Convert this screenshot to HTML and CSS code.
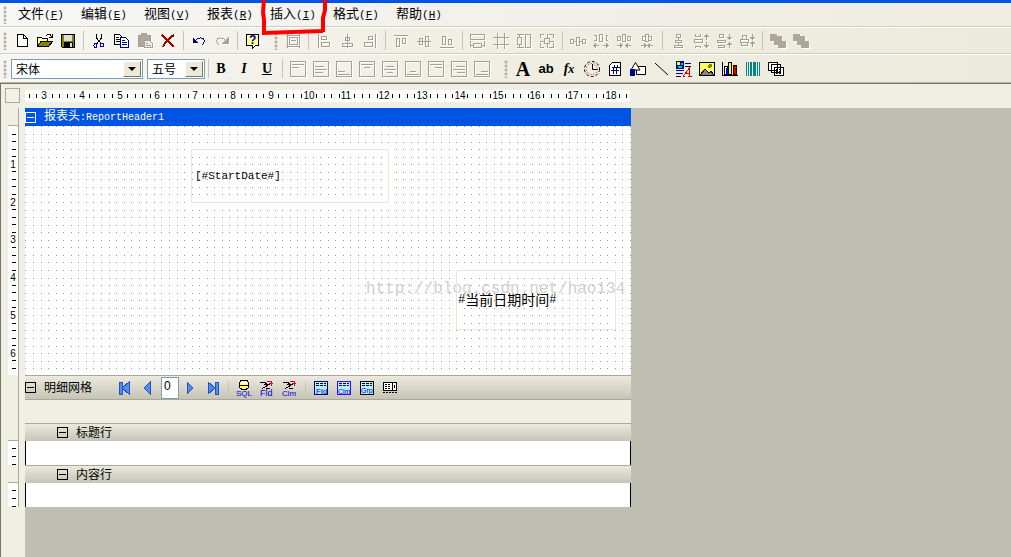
FILE: index.html
```html
<!DOCTYPE html>
<html lang="zh-CN">
<head>
<meta charset="utf-8">
<title>报表设计器</title>
<link rel="stylesheet" href="styles.css">
</head>
<body>
<div class="app">
<header>
  <nav class="menubar">
    <i class="grip"></i>
    <button>文件<span>(<u>F</u>)</span></button>
    <button>编辑<span>(<u>E</u>)</span></button>
    <button>视图<span>(<u>V</u>)</span></button>
    <button>报表<span>(<u>R</u>)</span></button>
    <button class="marked">插入<span>(<u>I</u>)</span>
      <svg class="marker" width="66" height="38" viewBox="0 0 66 38"><path d="M3 0 2 12 3 20 3 33 62 31M62 32 62 18 64 10 64 0"/></svg></button>
    <button>格式<span>(<u>F</u>)</span></button>
    <button>帮助<span>(<u>H</u>)</span></button>
  </nav>

  <div class="toolbar standard" role="toolbar" aria-label="标准">
    <i class="grip"></i>
    <button aria-label="新建"><svg class="i" viewBox="0 0 16 16"><path d="M3.500 1.500h6l4 4v8h-10zM9.500 1.500v4h4" fill="#fff" stroke="#000"/></svg></button>
    <button aria-label="打开"><svg class="i" viewBox="0 0 16 16"><path d="M.5 13.500v-9h4l1 1h5v3" fill="#ffffa0" stroke="#000"/><path d="M.5 13.500 4 8.500h11.500l-4 5z" fill="#848400" stroke="#000"/><path d="M9 3 11 1.500h2L15 4M15 1v3h-3" fill="none" stroke="#000"/></svg></button>
    <button aria-label="保存"><svg class="i" viewBox="0 0 16 16"><path d="M1.500 1.500h13v13h-12l-1-1z" fill="#848400" stroke="#000"/><path d="M4 2h8v6H4z" fill="#ddd"/><path d="M4 9h9v5H4z" fill="#000"/><path d="M10 10h2v4h-2z" fill="#ddd"/></svg></button>
    <i class="sep"></i>
    <button aria-label="剪切"><svg class="i" viewBox="0 0 16 16"><path d="M5.500 1v4l5 6M10.500 1v4l-5 6" fill="none" stroke="#000"/><ellipse cx="4.500" cy="12.500" rx="1.500" ry="2" fill="none" stroke="#0000a0"/><ellipse cx="11" cy="12" rx="1.500" ry="2" fill="none" stroke="#0000a0"/></svg></button>
    <button aria-label="复制"><svg class="i" viewBox="0 0 16 16"><path d="M.5 1.500h5l3 3v7h-8z" fill="#fff" stroke="#000"/><path d="M2 4.500h3M2 6.500h4M2 8.500h4" stroke="#000"/><path d="M6.500 4.500h5l3 3v7h-8z" fill="#fff" stroke="#000084"/><path d="M8 7.500h3M8 9.500h5M8 11.500h5" stroke="#000084"/></svg></button>
    <button aria-label="粘贴" disabled><svg class="i dim" viewBox="0 0 16 16"><path d="M1 2h3l1-2h4l1 2h3v5H7v6H1z" fill="#aca899"/><path d="M7.500 7.500h5l3 3v4h-8zM9 10h2M9 12h5" fill="#eee"/></svg></button>
    <button aria-label="删除"><svg class="i" viewBox="0 0 16 16"><path d="M2 2 14 14M14 2C9 5 5 9 3 14" fill="none" stroke="#a00000" stroke-width="2"/></svg></button>
    <i class="sep"></i>
    <button aria-label="撤消"><svg class="i" viewBox="0 0 16 16"><path d="M4 8c3-4 8-4 9-1 1 2 0 3-2 5" fill="none" stroke="#000084"/><path d="M2 5v5h5z" fill="#000084"/></svg></button>
    <button aria-label="重做" disabled><svg class="i dim" viewBox="0 0 16 16"><path d="M12 8C9 4 4 4 3 7c-1 2 0 3 2 5"/><path d="M14 5v5H9z" fill="#aca899"/></svg></button>
    <i class="sep"></i>
    <button aria-label="帮助"><svg class="i" viewBox="0 0 16 16"><path d="M1.500 1.500h12v11h-3l-3 3v-3h-6z" fill="#ffffa0" stroke="#000"/><text x="4" y="11" font-size="12" fill="#000084" font-weight="bold">?</text></svg></button>
    <i class="grip wide"></i>
    <button aria-label="对齐网格" disabled><svg class="i dim" viewBox="0 0 16 16"><path d="M4.500 4.500h8v7h-8zM2.500 1v14M1 2.500h14M14.500 1v14M1 13.500h14M6 7.500h5"/></svg></button>
    <i class="sep"></i>
    <button aria-label="左对齐" disabled><svg class="i dim" viewBox="0 0 16 16"><path d="M2.500 1v14M5.500 3.500h5v3h-5zM5.500 9.500h8v4h-8z"/></svg></button>
    <button aria-label="水平居中" disabled><svg class="i dim" viewBox="0 0 16 16"><path d="M8.500 1v14M6.500 4.500h4v3h-4zM3.500 10.500h10v3h-10z"/></svg></button>
    <button aria-label="右对齐" disabled><svg class="i dim" viewBox="0 0 16 16"><path d="M13.500 1v14M6.500 3.500h4v3h-4zM2.500 9.500h8v4h-8z"/></svg></button>
    <i class="sep"></i>
    <button aria-label="顶端对齐" disabled><svg class="i dim" viewBox="0 0 16 16"><path d="M1 2.500h14M3.500 5.500h3v8h-3zM9.500 5.500h3v5h-3z"/></svg></button>
    <button aria-label="垂直居中" disabled><svg class="i dim" viewBox="0 0 16 16"><path d="M1 8.500h14M3.500 5.500h3v6h-3zM9.500 3.500h3v10h-3z"/></svg></button>
    <button aria-label="底端对齐" disabled><svg class="i dim" viewBox="0 0 16 16"><path d="M1 14.500h14M3.500 3.500h3v8h-3zM9.500 6.500h3v5h-3z"/></svg></button>
    <i class="sep"></i>
    <button aria-label="等宽" disabled><svg class="i dim" viewBox="0 0 16 16"><path d="M.5 1.500h14v5H.5zM3.500 10.500h8v4h-8zM.5 8v6M14.500 8v6M1 12.500h2M12 12.500h2"/></svg></button>
    <button aria-label="等尺寸" disabled><svg class="i dim" viewBox="0 0 16 16"><path d="M4.500 0v16M11.500 0v16M0 4.500h16M0 11.500h16"/></svg></button>
    <button aria-label="等高" disabled><svg class="i dim" viewBox="0 0 16 16"><path d="M9.500 1.500h5v13h-5zM1.500 4.500h4v7h-4zM1 1.500h7M1 14.500h7M3.500 2v2M3.500 12v2"/></svg></button>
    <button aria-label="增大" disabled><svg class="i dim" viewBox="0 0 16 16"><path d="M1.500 5V1.500H5M10 1.500h4.500V5M1.500 10v4.500H5M10 14.500h4.500V10M5.500 5.500h5v5h-5zM8.500 1v4M8.500 11v4M1 8.500h4M11 8.500h4"/></svg></button>
    <i class="sep"></i>
    <button aria-label="水平间距相等" disabled><svg class="i dim" viewBox="0 0 16 16"><path d="M.5 6.500h3v4h-3zM6.500 4.500h3v8h-3zM12.500 6.500h3v4h-3zM4 8.500h2M10 8.500h2"/></svg></button>
    <button aria-label="增加水平间距" disabled><svg class="i dim" viewBox="0 0 16 16"><path d="M1 2.500h2v5H1M6.500 1.500h3v7h-3zM15 2.500h-2v5h2M1 12.500h5M3 10.500 1 12.500l2 2M10 12.500h5M13 10.500l2 2-2 2"/></svg></button>
    <button aria-label="减少水平间距" disabled><svg class="i dim" viewBox="0 0 16 16"><path d="M1.500 3.500h3v4h-3zM6.500 1.500h3v7h-3zM11.500 3.500h3v4h-3zM1 12.500h5M4 10.500l2 2-2 2M10 12.500h5M12 10.500l-2 2 2 2"/></svg></button>
    <button aria-label="移除水平间距" disabled><svg class="i dim" viewBox="0 0 16 16"><path d="M3.500 3.500h3v4h-3zM6.500 1.500h3v7h-3zM9.500 3.500h3v4h-3zM2 12.500h5M5 10.500l2 2-2 2M9 12.500h5M11 10.500l-2 2 2 2"/></svg></button>
    <i class="sep"></i>
    <button aria-label="垂直间距相等" disabled><svg class="i dim" viewBox="0 0 16 16"><path d="M6.500 1.500h4v3h-4zM5.500 7.500h6v2h-6zM4.500 12.500h8v2h-8zM8.500 5v2M8.500 10v2"/></svg></button>
    <button aria-label="增加垂直间距" disabled><svg class="i dim" viewBox="0 0 16 16"><path d="M2.500 1v2h5V1M1.500 6.500h8v3h-8zM2.500 15v-2h5v2M13.500 2v5M11.500 4l2-2 2 2M13.500 9v5M11.500 12l2 2 2-2"/></svg></button>
    <button aria-label="减少垂直间距" disabled><svg class="i dim" viewBox="0 0 16 16"><path d="M3.500 1.500h4v3h-4zM1.500 7.500h8v2h-8zM2.500 12.500h6v2h-6zM13.500 1v5M11.500 4l2 2 2-2M13.500 10v5M11.500 12l2-2 2 2"/></svg></button>
    <button aria-label="移除垂直间距" disabled><svg class="i dim" viewBox="0 0 16 16"><path d="M3.500 2.500h4v4h-4zM1.500 6.500h8v3h-8zM2.500 9.500h6v3h-6zM13.500 1v5M11.500 4l2 2 2-2M13.500 9v5M11.500 11l2-2 2 2"/></svg></button>
    <i class="sep"></i>
    <button aria-label="置前" disabled><svg class="i dim" viewBox="0 0 16 16"><path d="M0 1h7v2h5v5h4v7H8v-3H4V8H0z" fill="#aca899" stroke="none"/></svg></button>
    <button aria-label="置后" disabled><svg class="i dim" viewBox="0 0 16 16"><path d="M0 1h7v2h5v5h4v7H8v-3H4V8H0z" fill="#aca899" stroke="none"/></svg></button>
  </div>

  <div class="toolbar format" role="toolbar" aria-label="格式">
    <i class="grip"></i>
    <span class="combo font-name"><select aria-label="字体"><option>宋体</option></select><i class="drop"></i></span>
    <span class="combo font-size"><select aria-label="字号"><option>五号</option></select><i class="drop"></i></span>
    <i class="sep narrow"></i>
    <button class="letter"><b>B</b></button>
    <button class="letter"><em>I</em></button>
    <button class="letter"><u>U</u></button>
    <i class="sep"></i>
    <button aria-label="左上" disabled><svg class="i dim" viewBox="0 0 16 16"><path d="M.5.500h15v15H.5zM2 3.500h12M2 6.500h7"/></svg></button>
    <button aria-label="左中" disabled><svg class="i dim" viewBox="0 0 16 16"><path d="M.5.500h15v15H.5zM2 5.500h9M2 8.500h12M2 11.500h8"/></svg></button>
    <button aria-label="左下" disabled><svg class="i dim" viewBox="0 0 16 16"><path d="M.5.500h15v15H.5zM2 10.500h7M2 13.500h12"/></svg></button>
    <button aria-label="中上" disabled><svg class="i dim" viewBox="0 0 16 16"><path d="M.5.500h15v15H.5zM2 3.500h12M5 6.500h6"/></svg></button>
    <button aria-label="正中" disabled><svg class="i dim" viewBox="0 0 16 16"><path d="M.5.500h15v15H.5zM4 5.500h8M2 8.500h12M5 11.500h6"/></svg></button>
    <button aria-label="中下" disabled><svg class="i dim" viewBox="0 0 16 16"><path d="M.5.500h15v15H.5zM5 10.500h6M2 13.500h12"/></svg></button>
    <button aria-label="右上" disabled><svg class="i dim" viewBox="0 0 16 16"><path d="M.5.500h15v15H.5zM2 3.500h12M7 6.500h7"/></svg></button>
    <button aria-label="右中" disabled><svg class="i dim" viewBox="0 0 16 16"><path d="M.5.500h15v15H.5zM5 5.500h9M2 8.500h12M6 11.500h8"/></svg></button>
    <button aria-label="右下" disabled><svg class="i dim" viewBox="0 0 16 16"><path d="M.5.500h15v15H.5zM7 10.500h7M2 13.500h12"/></svg></button>
    <i class="grip wider"></i>
    <button class="glyph-a">A</button>
    <button class="glyph-ab">ab</button>
    <button class="glyph-fx">f<small>x</small></button>
    <button aria-label="时间"><svg class="i smooth" viewBox="0 0 16 16"><circle cx="8" cy="8" r="7.500" fill="none" stroke="#000" stroke-dasharray="3 2"/><circle cx="8" cy="8" r="5.500" fill="none" stroke="#d00000" stroke-dasharray="1 2"/><path d="M8.500 3v5.500H13" fill="none" stroke="#000"/></svg></button>
    <button aria-label="页码"><svg class="i" viewBox="0 0 16 16"><path d="M5.500 1.500h8v13h-11v-10z" fill="#fff" stroke="#000"/><path d="M5 6.500h8M4 9.500h8M7.500 4 6 13M10.500 4 9 13" stroke="#000084"/></svg></button>
    <button aria-label="图形"><svg class="i smooth" viewBox="0 0 16 16"><path d="M6.500 5.500h9v8h-9z" fill="#fff" stroke="#000"/><path d="M5.500 1.500 10 9H1z" fill="#fff" stroke="#000"/><path d="M0 8h5v7H0z" fill="#000084"/></svg></button>
    <button aria-label="线条"><svg class="i smooth" viewBox="0 0 16 16"><path d="M2 2 15 14" stroke="#000"/></svg></button>
    <button aria-label="图文框"><svg class="i" viewBox="0 0 16 16"><path d="M0 0h8v8H0z" fill="#000084"/><path d="M1 1h3v3H1z" fill="#ff0"/><path d="M5 2h2v2H5zM2 5h4v2H2z" fill="#0cc"/><path d="M9 2.500h6M9 5.500h6M0 9.500h8M0 12.500h7M0 15.500h5" stroke="#000084"/><path d="M7 15.500 13.500 7v8M9 12.500h4M12 15.500h4M7 15.500h2" fill="none" stroke="#e00000"/></svg></button>
    <button aria-label="图片"><svg class="i" viewBox="0 0 16 16"><path d="M.5 1.500h15v13H.5z" fill="#ffff60" stroke="#000"/><circle cx="11" cy="5" r="2" fill="#848400"/><path d="M1 14 6 8l4 4 2-2 3 4z" fill="#848484" stroke="#000"/></svg></button>
    <button aria-label="图表"><svg class="i" viewBox="0 0 16 16"><path d="M.5 1v13H16" fill="none" stroke="#000"/><path d="M2.500 5.500h3v8h-3z" fill="#fff" stroke="#000"/><path d="M4 7h3v7H4z" fill="#00f"/><path d="M6.500 1.500h3v12h-3z" fill="#ff0" stroke="#000"/><path d="M11.500 4.500h3v9h-3z" fill="#e00000" stroke="#000"/></svg></button>
    <button aria-label="条形码"><svg class="i" viewBox="0 0 16 16"><path d="M1.500 1v14M3.500 1v14M12.500 1v14M14.500 1v14" stroke="#008484"/><path d="M6 1v14M9 1v14" stroke="#008484" stroke-width="2"/><path d="M10.500 1v14" stroke="#008484"/></svg></button>
    <button aria-label="子报表"><svg class="i" viewBox="0 0 16 16"><path d="M.5 1.500h9v8h-9zM3.500 3.500h9v8h-9zM6.500 6.500h9v8h-9z" fill="#fff" stroke="#000"/><path d="M8 8.500h6M8 10.500h6M8 12.500h6" stroke="#000" stroke-dasharray="2 1"/></svg></button>
  </div>
</header>

<main class="work">
  <div class="top-ruler">
    <span class="corner"></span>
    <svg class="ruler-h" id="ruler-h"></svg>
  </div>

  <div class="design">
    <div class="side side-head"><span></span></div>
    <section class="band-title active"><button class="fold" aria-label="折叠"></button><span>报表头<span class="latin">:ReportHeader1</span></span></section>

    <div class="side side-ruler"><svg id="ruler-v"></svg></div>
    <section class="canvas">
      <svg class="dots"><defs><pattern id="dots" x="8" y="8" width="68" height="68" patternUnits="userSpaceOnUse"></pattern></defs><rect width="100%" height="100%" fill="url(#dots)"/></svg>
      <div class="watermark">http://blog.csdn.net/hao134</div>
      <div class="field start-date">[#StartDate#]</div>
      <div class="field now"><span>#</span>当前日期时间<span>#</span></div>
    </section>

    <div class="side side-blank"></div>
    <section class="detail">
      <div class="detail-bar">
        <button class="fold" aria-label="折叠"></button><span class="detail-name">明细网格</span>
        <button class="tool" aria-label="首条"><svg class="i nav" viewBox="0 0 16 16"><path d="M3 2h3v12H3zM13 2v12L6 8z"/></svg></button>
        <button class="tool" aria-label="上一条"><svg class="i nav" viewBox="0 0 16 16"><path d="M11 2v12L5 8z"/></svg></button>
        <input aria-label="记录" value="0">
        <button class="tool" aria-label="下一条"><svg class="i nav" viewBox="0 0 16 16"><path d="M5 2v12l6-6z"/></svg></button>
        <button class="tool" aria-label="末条"><svg class="i nav" viewBox="0 0 16 16"><path d="M3 2v12l7-6zM10 2h3v12h-3z"/></svg></button>
        <i class="sep"></i>
        <button class="tool" aria-label="查询"><svg class="i" viewBox="0 0 16 16"><path d="M3.500 2.500 5 .5h6l1.500 2v5l-2 1.500h-5l-2-1.500z" fill="#ffff60" stroke="#000"/><path d="M5 2h6v2H5z" fill="#fff"/><path d="M4 5.500h9" stroke="#000"/><text x="0" y="16" font-size="8">SQL</text></svg></button>
        <button class="tool" aria-label="字段"><svg class="i" viewBox="0 0 16 16"><path d="M1 2.500h5L9 6M3 8.500 11 4M5 4.500h5M7 8h4" fill="none" stroke="#000"/><path d="M8 1.500h4M10 3.500h4M12 6V1" stroke="#d00040"/><text x="1" y="16" font-size="9">Fld</text></svg></button>
        <button class="tool" aria-label="列"><svg class="i" viewBox="0 0 16 16"><path d="M1 2.500h5L9 6M3 8.500 11 4M5 4.500h5M7 8h4" fill="none" stroke="#000"/><path d="M8 1.500h4M10 3.500h4M12 6V1" stroke="#d00040"/><text x="0" y="16" font-size="8">Clm</text></svg></button>
        <i class="sep"></i>
        <button class="tool" aria-label="字段列表"><svg class="i" viewBox="0 0 16 16"><path d="M1.500 1.500h13v13h-13z" fill="#b8ecff" stroke="#000084"/><path d="M3 3.500h10M3 5.500h10" stroke="#000" stroke-dasharray="3 1"/><text x="3" y="14" font-size="8">Fld</text></svg></button>
        <button class="tool" aria-label="列列表"><svg class="i" viewBox="0 0 16 16"><path d="M1.500 1.500h13v13h-13z" fill="#b8ecff" stroke="#4000ff"/><path d="M3 3.500h10M3 5.500h10" stroke="#0000a0" stroke-dasharray="3 1"/><text x="2" y="14" font-size="7">Clm</text></svg></button>
        <button class="tool" aria-label="分组"><svg class="i" viewBox="0 0 16 16"><path d="M1.500 1.500h13v13h-13z" fill="#b8ecff" stroke="#000"/><path d="M3 3.500h10M3 5.500h10" stroke="#000" stroke-dasharray="3 1"/><text x="2" y="13" font-size="7">Grp</text></svg></button>
        <button class="tool" aria-label="表格"><svg class="i" viewBox="0 0 16 16"><path d="M1.500 2.500h13v8h-13z" fill="#fff" stroke="#000"/><path d="M3 4.500h6M3 6.500h6M3 8.500h6" stroke="#000" stroke-dasharray="2 1"/><path d="M10.500 2v9M12.500 5v3" stroke="#000"/><path d="M1 12.500h14" stroke="#000" stroke-dasharray="2 1"/></svg></button>
      </div>
    </section>
    <div class="side side-blank foot"></div>
    <section class="band-title"><button class="fold" aria-label="折叠"></button><span>标题行</span></section>
    <div class="side side-ruler"><i></i><i></i><i></i></div>
    <section class="band-row"></section>
    <div class="side side-blank foot"></div>
    <section class="band-title"><button class="fold" aria-label="折叠"></button><span>内容行</span></section>
    <div class="side side-ruler"><i></i><i></i><i></i></div>
    <section class="band-row"></section>
  </div>
</main>
</div>
<script src="rulers.js"></script>
</body>
</html>
```
FILE: styles.css
```css
* { box-sizing: border-box; }
body {
  margin: 0;
  background: #f0efe3;
  color: #000;
  font: 12px/16px "Liberation Sans", "Noto Sans CJK SC", sans-serif;
}
button {
  margin: 0;
  padding: 0;
  border: 0;
  background: none;
  color: inherit;
  font: inherit;
}
.app { display: flex; flex-direction: column; min-height: 100vh; }
header { border-top: 3px solid #0054e3; border-bottom: 1px solid #77756a; }

/* menu and tool bars */
.menubar, .toolbar { display: flex; align-items: center; border-bottom: 1px solid #d0cebf; }
.menubar {
  height: 24px;
  background: linear-gradient(to right, #f7f7f7, #f1f0ea 50%, #efeddf);
  font-size: 13px;
}
.menubar button { width: 63px; padding-left: 7px; text-align: left; white-space: nowrap; }
.menubar button span { font: 11px/16px "Liberation Mono", monospace; }
.marked { position: relative; }
.marker { position: absolute; left: -2px; top: -6px; z-index: 1; pointer-events: none; }
.marker path { fill: none; stroke: #f00; stroke-width: 4; }
.toolbar {
  border-top: 1px solid #fff;
  background: linear-gradient(to right, #f6f5f1, #f0eee2 50%, #eceadb);
}
.standard { height: 27px; }
.format { height: 29px; border-bottom-color: #b8b6a8; }
.toolbar button, .tool {
  display: grid;
  place-items: center;
  flex: none;
  width: 23px;
  height: 22px;
  padding-right: 1px;
}
.grip { flex: none; width: 11px; height: 18px; background: radial-gradient(circle at 5px 2px, #b5b3a5 1px, transparent 2px) 0 0 / 11px 4px; }
.grip.wide { width: 17px; background-position: 6px 0; background-size: 17px 4px; }
.grip.wider { width: 18px; background-position: 7px 0; background-size: 18px 4px; }
.sep { flex: none; width: 8px; height: 19px; background: linear-gradient(#c6c3b4, #c6c3b4) 3px 0 / 1px 100% no-repeat; }
.sep.narrow { width: 5px; }
.i { display: block; width: 16px; height: 16px; overflow: visible; shape-rendering: crispEdges; }
.i.smooth { shape-rendering: auto; }
.i text { font-family: "Liberation Sans", sans-serif; }
.dim { fill: none; stroke: #a5a192; filter: drop-shadow(1px 1px 0 #fff); }
.combo { position: relative; height: 20px; border: 1px solid #7f9db9; background: #fff; }
.combo select {
  display: block;
  width: 100%;
  height: 18px;
  padding: 0 4px;
  border: 0;
  background: none;
  color: #000;
  font: 12px/16px "Noto Sans CJK SC", sans-serif;
  appearance: none;
}
.font-name { width: 132px; margin-right: 4px; }
.font-size { width: 58px; }
.drop {
  position: absolute;
  right: 1px;
  top: 1px;
  width: 18px;
  height: 16px;
  border: 1px solid;
  border-color: #fff #77756a #77756a #fff;
  background: #ece9d8;
  pointer-events: none;
}
.drop::after {
  content: "";
  display: block;
  width: 0;
  margin: 5px auto;
  border: 4px solid transparent;
  border-top-color: #000;
  border-bottom: 0;
}
.toolbar .letter { font: bold 14px/16px "Liberation Serif", serif; }
.toolbar .glyph-a { font: bold 20px/20px "Liberation Serif", serif; }
.toolbar .glyph-ab { font: bold 13px/16px "Liberation Sans", sans-serif; }
.toolbar .glyph-fx { display: block; font: italic bold 14px/20px "Liberation Serif", serif; }
.glyph-fx small { font-size: 12px; }

/* design surface */
.work { display: flex; flex: 1; flex-direction: column; border-left: 1px solid #77756a; }
.top-ruler { display: flex; align-items: flex-start; height: 24px; padding: 4px 0 0 4px; }
.corner { width: 15px; height: 15px; margin-right: 5px; border: 1px solid #aca899; background: #f2f1e7; }
.ruler-h { width: 605px; height: 12px; margin-top: 2px; background: #fff; }
#ruler-h, #ruler-v { font: 10px "Liberation Sans", sans-serif; shape-rendering: crispEdges; }
.design {
  display: grid;
  flex: 1;
  grid-template-columns: 24px minmax(0, 606px);
  align-content: start;
  background: linear-gradient(to right, #f0efe3 24px, #bfbfb3 24px);
}
.side { width: 11px; margin-left: 7px; border-right: 1px solid #aca899; }
.side-head { border-bottom: 1px solid #aca899; }
.side-ruler { background: #fff; }
.side-ruler svg { display: block; width: 10px; height: 249px; }
.side-ruler i { display: block; width: 4px; height: 1px; margin: 7px 0 0 4px; background: #000; }
.side-blank.foot { border-bottom: 1px solid #aca899; }
.band-title {
  display: flex;
  align-items: center;
  gap: 8px;
  height: 18px;
  padding-left: 32px;
  border-top: 1px solid #aca899;
  background: linear-gradient(#eceade, #c5c4b6);
}
.band-title.active { padding-left: 0; border: 0; background: #0054e3; color: #fff; }
.latin { font: 10px/16px "Liberation Mono", monospace; }
.fold { flex: none; width: 11px; height: 11px; border: 1px solid currentColor; }
.fold::after { content: ""; display: block; height: 1px; margin: 0 1px; background: currentColor; }
.canvas { position: relative; overflow: hidden; background: #fff; }
.dots { display: block; width: 100%; height: 249px; shape-rendering: crispEdges; }
.field { position: absolute; display: flex; align-items: center; border: 1px solid #e9e7da; }
.start-date { left: 166px; top: 23px; width: 198px; height: 54px; padding-left: 3px; font: 11px/16px "Liberation Mono", monospace; }
.now { left: 431px; top: 144px; width: 160px; height: 60px; padding-left: 1px; font-size: 14px; }
.now span { font: 12px/16px "Liberation Mono", monospace; }
.watermark { position: absolute; left: 341px; top: 153px; color: #d0d0d0; font: 16px/20px "Liberation Mono", monospace; white-space: nowrap; }
.detail { height: 48px; background: #f0efe3; }
.detail-bar {
  display: flex;
  align-items: center;
  height: 25px;
  border-top: 1px solid #aca899;
  border-bottom: 1px solid #aca899;
  background: linear-gradient(#eceade, #c5c4b6);
}
.detail-name { width: 69px; margin-left: 8px; }
.detail-bar input {
  width: 18px;
  height: 22px;
  margin-left: 2px;
  padding: 0 0 3px 2px;
  border: 1px solid #7f9db9;
  background: #fff;
  font: 12px/16px "Liberation Sans", sans-serif;
}
.detail-bar .sep { height: 14px; }
.detail-bar text { fill: #00d; }
.nav { fill: #4f8ff0; stroke: #2455b8; }
.band-row { height: 24px; border: solid #000; border-width: 0 1px; background: #fff; }
```
FILE: rulers.js
```js
const NS = "http://www.w3.org/2000/svg";
const CM = 37.8;

function add(parent, name, attrs, text) {
  const el = document.createElementNS(NS, name);
  for (const key in attrs) el.setAttribute(key, attrs[key]);
  if (text !== undefined) el.textContent = text;
  parent.append(el);
}

// Five divisions to the centimetre: a number on each whole one, a tick on the others.
function ruler(id, origin, from, to, vertical) {
  const svg = document.getElementById(id);
  for (let i = from; i <= to; i++) {
    const pos = Math.round(origin + i * CM / 5);
    if (i % 5 === 0) {
      const at = vertical ? { x: 5, y: pos + 4 } : { x: pos, y: 9 };
      add(svg, "text", { ...at, "text-anchor": "middle" }, i / 5);
    } else {
      const box = vertical
        ? { x: 4, y: pos, width: 4, height: 1 }
        : { x: pos, y: 4, width: 1, height: 4 };
      add(svg, "rect", box);
    }
  }
}
ruler("ruler-h", 19 - 3 * CM, 13, 92, false);
ruler("ruler-v", 0, 1, 32, true);

const dots = document.getElementById("dots");
for (let row = 0; row < 9; row++) {
  for (let col = 0; col < 9; col++) {
    add(dots, "rect", {
      x: Math.round(col * 68 / 9), y: Math.round(row * 68 / 9),
      width: 1, height: 1, fill: "#999"
    });
  }
}
```
